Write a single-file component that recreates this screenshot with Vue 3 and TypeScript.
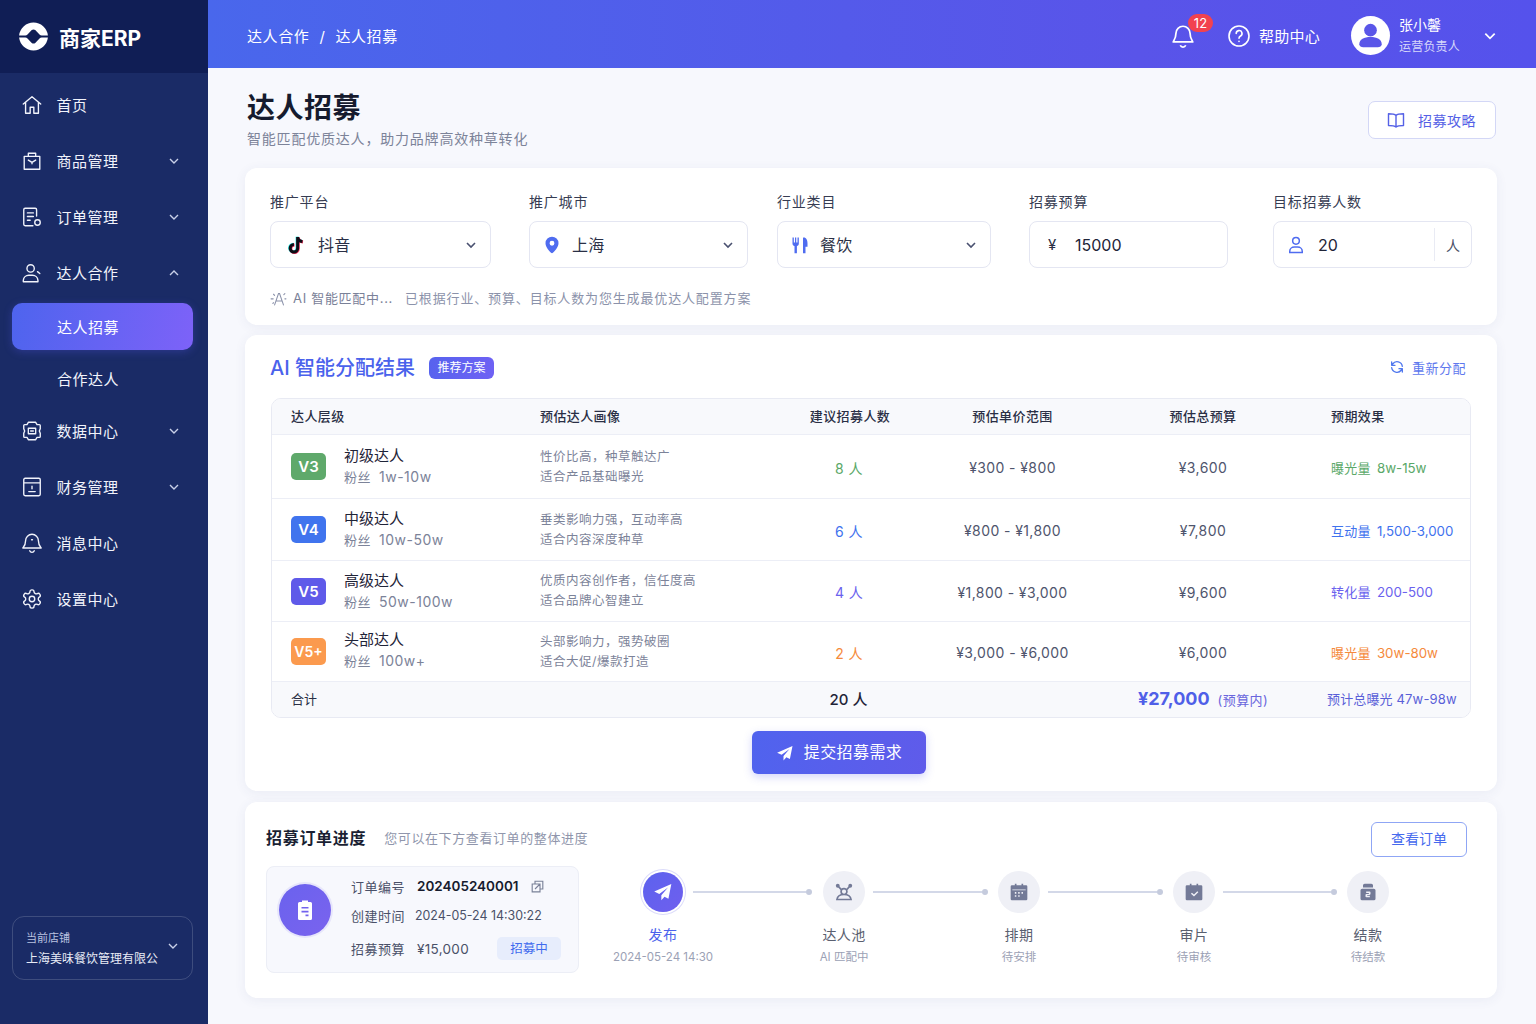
<script setup lang="ts">
interface NavItem {
  label: string;
  icon: string;
  arrow?: "down" | "up";
}

const iconHome = "M2.500 11 12 3l9.500 8M5 9v12h5v-6.500h4V21h5V9";
const iconGoods = "M3.500 7h17v14h-17zM8 7V3.500h8V7M8 11l4 2.500 4-2.500M12 13.500V15";
const iconOrder = "M17 11V4a1.500 1.500 0 0 0-1.500-1.500h-11A1.500 1.500 0 0 0 3 4v16a1.500 1.500 0 0 0 1.500 1.500H13M7 7.500h6.500M7 11.500h6.500M7 15.500h3M21 18a3 3 0 1 1-6 0 3 3 0 0 1 6 0z";
const iconTalent = "M14.500 7a4 4 0 1 1-8 0 4 4 0 0 1 8 0zM2.500 21.500V20a6 6 0 0 1 6-5.500h4a6 6 0 0 1 6 5.500v1.500zM18 10.500l2.500 2";
const iconData = "M8 2.500h8l1.500 2.500H20a1 1 0 0 1 1 1v3.500L20 12l1 2.500V18a1 1 0 0 1-1 1h-2.500L16 21.500H8L6.500 19H4a1 1 0 0 1-1-1v-3.500L4 12 3 9.500V6a1 1 0 0 1 1-1h2.500zM8 9h8v6H8zM10.500 12h3";
const iconFinance = "M4.500 2.500h15A1.500 1.500 0 0 1 21 4v16a1.500 1.500 0 0 1-1.500 1.500h-15A1.500 1.500 0 0 1 3 20V4a1.500 1.500 0 0 1 1.500-1.500zM3 7.500h18M8.500 17h7M12 11v3";
const iconBell = "M12 2.500A7 7 0 0 0 5 9.500c0 5.500-3 7.500-3 8h20c0-.5-3-2.500-3-8a7 7 0 0 0-7-7zM9.500 20.500a2.700 2.700 0 0 0 5 0M11.500 8.500h1";
const iconGear = "M12.220 2h-.44a2 2 0 0 0-2 2v.18a2 2 0 0 1-1 1.730l-.43.25a2 2 0 0 1-2 0l-.15-.08a2 2 0 0 0-2.730.73l-.22.38a2 2 0 0 0 .73 2.730l.15.1a2 2 0 0 1 1 1.720v.51a2 2 0 0 1-1 1.740l-.15.09a2 2 0 0 0-.73 2.730l.22.38a2 2 0 0 0 2.730.73l.15-.08a2 2 0 0 1 2 0l.43.25a2 2 0 0 1 1 1.730V20a2 2 0 0 0 2 2h.44a2 2 0 0 0 2-2v-.18a2 2 0 0 1 1-1.730l.43-.25a2 2 0 0 1 2 0l.15.08a2 2 0 0 0 2.730-.73l.22-.39a2 2 0 0 0-.73-2.730l-.15-.08a2 2 0 0 1-1-1.740v-.5a2 2 0 0 1 1-1.740l.15-.09a2 2 0 0 0 .73-2.730l-.22-.38a2 2 0 0 0-2.730-.73l-.15.08a2 2 0 0 1-2 0l-.43-.25a2 2 0 0 1-1-1.730V4a2 2 0 0 0-2-2zM15 12a3 3 0 1 1-6 0 3 3 0 0 1 6 0z";

const navTop: NavItem[] = [
  { label: "首页", icon: iconHome },
  { label: "商品管理", icon: iconGoods, arrow: "down" },
  { label: "订单管理", icon: iconOrder, arrow: "down" },
  { label: "达人合作", icon: iconTalent, arrow: "up" },
];
const navBottom: NavItem[] = [
  { label: "数据中心", icon: iconData, arrow: "down" },
  { label: "财务管理", icon: iconFinance, arrow: "down" },
  { label: "消息中心", icon: iconBell },
  { label: "设置中心", icon: iconGear },
];

const rows = [
  { level: "V3", cls: "green", name: "初级达人", fans: "1w-10w", p1: "性价比高，种草触达广", p2: "适合产品基础曝光", count: "8 人", price: "¥300 - ¥800", total: "¥3,600", kind: "曝光量", effect: "8w-15w" },
  { level: "V4", cls: "blue", name: "中级达人", fans: "10w-50w", p1: "垂类影响力强，互动率高", p2: "适合内容深度种草", count: "6 人", price: "¥800 - ¥1,800", total: "¥7,800", kind: "互动量", effect: "1,500-3,000" },
  { level: "V5", cls: "purple", name: "高级达人", fans: "50w-100w", p1: "优质内容创作者，信任度高", p2: "适合品牌心智建立", count: "4 人", price: "¥1,800 - ¥3,000", total: "¥9,600", kind: "转化量", effect: "200-500" },
  { level: "V5+", cls: "orange", name: "头部达人", fans: "100w+", p1: "头部影响力，强势破圈", p2: "适合大促/爆款打造", count: "2 人", price: "¥3,000 - ¥6,000", total: "¥6,000", kind: "曝光量", effect: "30w-80w" },
];

const steps = [
  { title: "达人池", sub: "AI 匹配中", kind: "pool" },
  { title: "排期", sub: "待安排", kind: "cal" },
  { title: "审片", sub: "待审核", kind: "check" },
  { title: "结款", sub: "待结款", kind: "pay" },
];
</script>

<template>
  <div class="layout">
    <aside class="sidebar">
      <div class="brand">
        <svg class="brand__logo" viewBox="0 0 30 30">
          <path fill="#fff" d="M.1 13.900A15 15 0 0 1 29.900 13.900H23.500c-1 0-1.600-.4-2.300-1L16.800 8.400c-1-.9-2.600-.9-3.600 0L8.800 12.900c-.7.600-1.300 1-2.300 1z" />
          <path fill="#fff" d="M.1 16.100A15 15 0 0 0 29.900 16.100H23.500c-1 0-1.600.4-2.300 1l-4.400 4.500c-1 .9-2.600.9-3.600 0l-4.400-4.500c-.7-.6-1.300-1-2.300-1z" />
        </svg>
        <span>商家ERP</span>
      </div>
      <nav class="nav">
        <div v-for="item in navTop" :key="item.label" class="nav__item">
          <svg class="nav__icon" viewBox="0 0 24 24"><path :d="item.icon" /></svg>
          <span>{{ item.label }}</span>
          <svg v-if="item.arrow" class="nav__arrow" :class="{ 'nav__arrow--up': item.arrow === 'up' }" viewBox="0 0 12 12"><path d="M2 4l4 4 4-4" /></svg>
        </div>
        <div class="nav__sub nav__sub--active">达人招募</div>
        <div class="nav__sub">合作达人</div>
        <div v-for="item in navBottom" :key="item.label" class="nav__item">
          <svg class="nav__icon" viewBox="0 0 24 24"><path :d="item.icon" /></svg>
          <span>{{ item.label }}</span>
          <svg v-if="item.arrow" class="nav__arrow" viewBox="0 0 12 12"><path d="M2 4l4 4 4-4" /></svg>
        </div>
      </nav>
      <div class="store">
        <div>
          <div class="store__label">当前店铺</div>
          <div class="store__name">上海美味餐饮管理有限公</div>
        </div>
        <svg class="nav__arrow store__arrow" viewBox="0 0 12 12"><path d="M2 4l4 4 4-4" /></svg>
      </div>
    </aside>

    <div class="content">
      <header class="topbar">
        <div class="crumbs"><span>达人合作</span><span class="crumbs__sep">/</span><span>达人招募</span></div>
        <div class="topbar__right">
          <div class="bell">
            <svg viewBox="0 0 24 24"><path d="M12 3a6.500 6.500 0 0 0-6.500 6.500c0 5-2.500 7-2.500 8h18c0-1-2.500-3-2.500-8A6.500 6.500 0 0 0 12 3zM9.500 20.500a2.700 2.700 0 0 0 5 0" /></svg>
            <span class="bell__badge">12</span>
          </div>
          <div class="help">
            <svg viewBox="0 0 24 24"><circle cx="12" cy="12" r="10" /><path d="M9.200 9.500a2.900 2.900 0 1 1 4.300 2.500c-1 .6-1.500 1.200-1.500 2.300M12 17.300v.2" /></svg>
            <span>帮助中心</span>
          </div>
          <div class="avatar">
            <svg viewBox="0 0 40 40"><circle cx="20" cy="14.500" r="6.500" /><path d="M8.500 29c0-5 5-7.500 11.500-7.500S31.500 24 31.500 29c0 2-2 3-4 3h-15c-2 0-4-1-4-3z" /></svg>
          </div>
          <div class="user">
            <div class="user__name">张小馨</div>
            <div class="user__role">运营负责人</div>
          </div>
          <svg class="user__arrow" viewBox="0 0 12 12"><path d="M2 4l4 4 4-4" /></svg>
        </div>
      </header>

      <main class="main">
        <div class="page-head">
          <div>
            <h1>达人招募</h1>
            <p>智能匹配优质达人，助力品牌高效种草转化</p>
          </div>
          <button class="guide" type="button">
            <svg viewBox="0 0 24 24"><path d="M12 6.500C10.500 5 8 4.500 3 4.500v14c5 0 7.500.5 9 2 1.500-1.500 4-2 9-2v-14c-5 0-7.500.5-9 2zM12 6.500v14" /></svg>
            <span>招募攻略</span>
          </button>
        </div>

        <section class="card filter">
          <div class="filter__fields">
            <div class="field field--platform">
              <label>推广平台</label>
              <div class="ctl">
                <svg class="ctl__icon" viewBox="0 0 24 24">
                  <g fill="none" stroke-width="3.600">
                    <path stroke="#25e6e0" d="M13.300 2v13.500a4.500 4.500 0 1 1-4.500-4.500M13.300 2c.4 3 2.400 5 5.700 5.400" />
                    <path stroke="#f5325c" d="M14.700 3v13.500a4.500 4.500 0 1 1-4.500-4.500M14.700 3c.4 3 2.400 5 5.700 5.400" />
                    <path stroke="#0d0d16" d="M14 2.500V16a4.500 4.500 0 1 1-4.500-4.500M14 2.500c.4 3 2.400 5 5.700 5.400" />
                  </g>
                </svg>
                <span class="ctl__text">抖音</span>
                <svg class="ctl__arrow" viewBox="0 0 12 12"><path d="M2 4l4 4 4-4" /></svg>
              </div>
            </div>
            <div class="field field--city">
              <label>推广城市</label>
              <div class="ctl">
                <svg class="ctl__icon" viewBox="0 0 24 24"><path fill="#4f6cf0" fill-rule="evenodd" d="M12 2a7.800 7.800 0 0 1 7.800 7.800c0 5-5 10-7.800 12.200-2.800-2.200-7.800-7.200-7.800-12.200A7.800 7.800 0 0 1 12 2zm0 5a2.900 2.900 0 1 0 0 5.800A2.900 2.900 0 0 0 12 7z" /></svg>
                <span class="ctl__text">上海</span>
                <svg class="ctl__arrow" viewBox="0 0 12 12"><path d="M2 4l4 4 4-4" /></svg>
              </div>
            </div>
            <div class="field field--industry">
              <label>行业类目</label>
              <div class="ctl">
                <svg class="ctl__icon" viewBox="0 0 24 24"><path fill="#4f6cf0" d="M3 3h1.600v6H6V3h1.500v6H9V3h1.600v7.500c0 1.500-1 2.400-2.300 2.800V22H5.400v-8.700C4 12.900 3 12 3 10.500zM16.500 3c3 0 4.500 3 4.500 7v4h-2.400v8h-3V3.500c0-.3.500-.5.900-.5z" /></svg>
                <span class="ctl__text">餐饮</span>
                <svg class="ctl__arrow" viewBox="0 0 12 12"><path d="M2 4l4 4 4-4" /></svg>
              </div>
            </div>
            <div class="field field--budget">
              <label>招募预算</label>
              <div class="ctl">
                <span class="ctl__yen">¥</span>
                <span class="ctl__value">15000</span>
              </div>
            </div>
            <div class="field field--target">
              <label>目标招募人数</label>
              <div class="ctl ctl--unit">
                <svg class="ctl__icon" viewBox="0 0 24 24"><path fill="none" stroke="#4f6cf0" stroke-width="1.800" d="M16 7a4 4 0 1 1-8 0 4 4 0 0 1 8 0zM4.500 21v-1.500c0-3 2.500-5 5.500-5h4c3 0 5.500 2 5.500 5V21z" /></svg>
                <span class="ctl__value">20</span>
                <span class="ctl__unit">人</span>
              </div>
            </div>
          </div>
          <div class="hint">
            <svg viewBox="0 0 24 24"><path d="M6.500 21 12 5h1.500L19 21M8.500 15.500h8M1.500 12.500h3M5 6l1.500 1.500M4 19l1-1M19.500 6.500l1.500-1.500M21 12.500h1.500" /></svg>
            <span class="hint__a">AI 智能匹配中...</span>
            <span class="hint__b">已根据行业、预算、目标人数为您生成最优达人配置方案</span>
          </div>
        </section>

        <section class="card result">
          <div class="result__head">
            <h2>AI 智能分配结果</h2>
            <span class="result__tag">推荐方案</span>
            <div class="result__redo">
              <svg viewBox="0 0 24 24"><path d="M20 11a8 8 0 0 0-14.500-3.500L4 9.500M4 4.500v5h5M4 13a8 8 0 0 0 14.500 3.500l1.500-2M20 19.500v-5h-5" /></svg>
              <span>重新分配</span>
            </div>
          </div>

          <div class="table">
            <div class="tr tr--head">
              <div class="td td--first">达人层级</div>
              <div class="td">预估达人画像</div>
              <div class="td td--c">建议招募人数</div>
              <div class="td td--c">预估单价范围</div>
              <div class="td td--c">预估总预算</div>
              <div class="td td--last">预期效果</div>
            </div>
            <div v-for="row in rows" :key="row.level" class="tr tr--body">
              <div class="td td--first level">
                <span class="level__badge" :class="`bg-${row.cls}`">{{ row.level }}</span>
                <div class="level__text">
                  <div class="level__name">{{ row.name }}</div>
                  <div class="level__fans"><span>粉丝</span>{{ row.fans }}</div>
                </div>
              </div>
              <div class="td persona">
                <div>{{ row.p1 }}</div>
                <div>{{ row.p2 }}</div>
              </div>
              <div class="td td--c num num--count" :class="`fg-${row.cls}`">{{ row.count }}</div>
              <div class="td td--c num">{{ row.price }}</div>
              <div class="td td--c num">{{ row.total }}</div>
              <div class="td td--last effect" :class="`fg-${row.cls}`"><span>{{ row.kind }}</span>{{ row.effect }}</div>
            </div>
            <div class="tr tr--foot">
              <div class="td td--first">合计</div>
              <div class="td"></div>
              <div class="td td--c foot__count">20 人</div>
              <div class="td"></div>
              <div class="td td--c foot__total"><strong>¥27,000</strong><span>(预算内)</span></div>
              <div class="td foot__effect">预计总曝光 47w-98w</div>
            </div>
          </div>

          <div class="result__action">
            <button class="submit" type="button">
              <svg viewBox="0 0 24 24"><path fill="#fff" d="M22 2.500 1.500 11.500l6 2.800L18 6.500l-8 9.500v6l3.800-4.300 4.700 2.300z" /></svg>
              <span>提交招募需求</span>
            </button>
          </div>
        </section>

        <section class="card progress">
          <div class="progress__head">
            <h3>招募订单进度</h3>
            <span>您可以在下方查看订单的整体进度</span>
            <button class="view" type="button">查看订单</button>
          </div>
          <div class="progress__body">
            <div class="order">
              <div class="order__avatar">
                <svg viewBox="0 0 24 24"><path fill="#fff" fill-rule="evenodd" d="M9 2.500h6V4h2.500A1.500 1.500 0 0 1 19 5.500v15a1.500 1.500 0 0 1-1.500 1.500h-11A1.500 1.500 0 0 1 5 20.500v-15A1.500 1.500 0 0 1 6.500 4H9zM8.500 9v1.600h7V9zm0 3.800v1.600h7v-1.600zm4 3.800v1.600h3v-1.600z" /></svg>
              </div>
              <div class="order__info">
                <div class="order__row">
                  <span class="order__key">订单编号</span>
                  <strong>202405240001</strong>
                  <svg class="order__copy" viewBox="0 0 24 24"><path d="M8 8V3.500h12.500V16H16M3.500 8H16v12.500H3.500zM8 16l8-8" /></svg>
                </div>
                <div class="order__row order__row--time">
                  <span class="order__key">创建时间</span>
                  <span class="order__time">2024-05-24 14:30:22</span>
                </div>
                <div class="order__row order__row--budget">
                  <span class="order__key">招募预算</span>
                  <span class="order__money">¥15,000</span>
                  <span class="order__tag">招募中</span>
                </div>
              </div>
            </div>

            <div class="steps">
              <div class="step step--active">
                <div class="step__circle">
                  <svg viewBox="0 0 24 24"><path fill="#fff" d="M22 2.500 1.500 11.500l6 2.800L18 6.500l-8 9.500v6l3.800-4.300 4.700 2.300z" /></svg>
                </div>
                <div class="step__title">发布</div>
                <div class="step__sub">2024-05-24 14:30</div>
              </div>
              <template v-for="(step, i) in steps" :key="step.title">
                <div class="link" :class="{ 'link--first': i === 0, 'link--last': i === steps.length - 1 }"><i></i><b></b></div>
                <div class="step">
                  <div class="step__circle">
                    <svg v-if="step.kind === 'pool'" viewBox="0 0 24 24"><path fill="none" stroke="#737a97" stroke-width="2" d="M4.500 4.500 9 9.500M19.500 4.500 15 9.500M15.500 11.500a3.500 3.500 0 1 1-7 0 3.500 3.500 0 0 1 7 0zM3.500 21c.5-3.500 3.500-6 8.500-6s8 2.500 8.500 6z" /><circle cx="4.500" cy="4.500" r="2.300" fill="#737a97" /><circle cx="19.500" cy="4.500" r="2.300" fill="#737a97" /></svg>
                    <svg v-else-if="step.kind === 'cal'" viewBox="0 0 24 24"><path fill="#737a97" fill-rule="evenodd" d="M7 2h2v2h6V2h2v2h3.500A1.500 1.500 0 0 1 22 5.500v15a1.500 1.500 0 0 1-1.500 1.500h-17A1.500 1.500 0 0 1 2 20.500v-15A1.500 1.500 0 0 1 3.500 4H7zM4 9v.8h16V9zm3 3v2h1.800v-2zm4 0v2h1.800v-2zm4 0v2h1.800v-2zm-8 4v1.800h1.800V16zm4 0v1.800h1.800V16z" /></svg>
                    <svg v-else-if="step.kind === 'check'" viewBox="0 0 24 24"><path fill="#737a97" fill-rule="evenodd" d="M7 2h2v2h6V2h2v2h3.500A1.500 1.500 0 0 1 22 5.500v15a1.500 1.500 0 0 1-1.500 1.500h-17A1.500 1.500 0 0 1 2 20.500v-15A1.500 1.500 0 0 1 3.500 4H7zm9 9-4 4-2.500-2.200-1.200 1.300 3.700 3.300 5.200-5.200z" /></svg>
                    <svg v-else viewBox="0 0 24 24"><path fill="#737a97" fill-rule="evenodd" d="M8 2h8a2 2 0 0 1 2 2v2.500H6V4a2 2 0 0 1 2-2zM5 8h14a2 2 0 0 1 2 2v10a2 2 0 0 1-2 2H5a2 2 0 0 1-2-2V10a2 2 0 0 1 2-2zm4.800 3.500v1.800h3.200v1H10c-.6 0-1 .4-1 1v2c0 .6.400 1 1 1h4.200v-1.800H11v-1h3c.6 0 1-.4 1-1v-2c0-.6-.4-1-1-1z" /></svg>
                  </div>
                  <div class="step__title">{{ step.title }}</div>
                  <div class="step__sub">{{ step.sub }}</div>
                </div>
              </template>
            </div>
          </div>
        </section>
      </main>
    </div>
  </div>
</template>

<style>
body {
  margin: 0;
  background: #f7f8fd;
}
</style>

<style scoped>
.layout {
  display: flex;
  min-height: 1024px;
  font-family: Inter, "Noto Sans CJK SC", sans-serif;
  color: #1c2238;
}

svg {
  display: block;
  flex: none;
}

/* Sidebar */
.sidebar {
  width: 208px;
  flex: none;
  display: flex;
  flex-direction: column;
  background: #1a2b66;
  color: #fff;
}

.brand {
  height: 73px;
  display: flex;
  align-items: center;
  gap: 11px;
  padding-left: 19px;
  background: #101e55;
  font-size: 21px;
  font-weight: 700;
  box-sizing: border-box;
}

.brand__logo {
  width: 29px;
  height: 31px;
}

.nav {
  padding-top: 3.5px;
}

.nav__item {
  height: 56px;
  display: flex;
  align-items: center;
  padding: 0 28px 0 21px;
  font-size: 15px;
  letter-spacing: 0.5px;
  color: #f1f3fb;
}

.nav__item span {
  margin-top: -1px;
}

.nav__icon {
  width: 22px;
  height: 22px;
  margin-right: 13.5px;
  fill: none;
  stroke: #f1f3fb;
  stroke-width: 1.5;
  stroke-linejoin: round;
  stroke-linecap: round;
}

.nav__arrow {
  width: 12px;
  height: 12px;
  margin-left: auto;
  fill: none;
  stroke: #c9d0e8;
  stroke-width: 1.4;
}

.nav__arrow--up {
  transform: rotate(180deg);
}

.nav__sub {
  height: 47px;
  margin: 0 15px 0 12px;
  padding-left: 45px;
  display: flex;
  align-items: center;
  border-radius: 10px;
  font-size: 15px;
  letter-spacing: 0.5px;
  color: #f1f3fb;
}

.nav__sub--active {
  margin-top: 2.5px;
  margin-bottom: 5px;
  background: linear-gradient(100deg, #4e64ee, #7d62f8);
  box-shadow: 0 2px 8px rgba(90, 90, 240, 0.3);
  color: #fff;
}

.nav__sub:not(.nav__sub--active) {
  margin-bottom: 0.5px;
}

.store {
  margin: auto 15px 44px 12px;
  height: 64px;
  box-sizing: border-box;
  padding: 1px 13px 0;
  display: flex;
  align-items: center;
  justify-content: space-between;
  border: 1px solid rgba(255, 255, 255, 0.16);
  border-radius: 12px;
}

.store__label {
  font-size: 11px;
  color: #b9c2e0;
  line-height: 16px;
}

.store__name {
  margin-top: 4px;
  font-size: 12px;
  line-height: 18px;
  white-space: nowrap;
  color: #e8ebf6;
}

.store__arrow {
  margin-bottom: 6px;
}

/* Topbar */
.content {
  flex: 1;
  min-width: 0;
}

.topbar {
  height: 68px;
  display: flex;
  align-items: center;
  justify-content: space-between;
  box-sizing: border-box;
  padding: 3px 39px 0 39px;
  background: linear-gradient(90deg, #4967ec, #5954e9 70%, #5552ec);
  color: #fff;
  font-size: 15px;
}

.crumbs {
  letter-spacing: 0.6px;
}

.crumbs__sep {
  margin: 0 10px;
}

.topbar__right {
  display: flex;
  align-items: center;
}

.bell {
  position: relative;
  width: 26px;
  height: 26px;
  margin-right: 31px;
}

.bell svg {
  width: 26px;
  height: 26px;
  fill: none;
  stroke: #fff;
  stroke-width: 1.6;
  stroke-linejoin: round;
}

.bell__badge {
  position: absolute;
  left: 18px;
  top: -9px;
  width: 25px;
  height: 18px;
  border-radius: 9px;
  background: #f2424f;
  font-size: 13px;
  line-height: 18px;
  text-align: center;
}

.help {
  display: flex;
  align-items: center;
  gap: 8px;
  margin-right: 31px;
  letter-spacing: 0.25px;
}

.help svg {
  width: 24px;
  height: 24px;
  fill: none;
  stroke: #fff;
  stroke-width: 1.6;
  stroke-linecap: round;
}

.avatar {
  width: 39px;
  height: 39px;
  border-radius: 50%;
  background: #fff;
  margin-right: 9px;
}

.avatar svg {
  width: 39px;
  height: 39px;
  fill: #5a56e8;
}

.user__name {
  font-size: 14px;
  line-height: 20px;
}

.user__role {
  margin-top: 3px;
  font-size: 12px;
  line-height: 18px;
  letter-spacing: 0.2px;
  color: #d6d8fa;
}

.user__arrow {
  width: 14px;
  height: 14px;
  margin-left: 23px;
  fill: none;
  stroke: #fff;
  stroke-width: 1.5;
}

/* Main */
.main {
  padding: 0 39px 0 37px;
}

.page-head {
  height: 100px;
  display: flex;
  justify-content: space-between;
  box-sizing: border-box;
  padding: 21px 1px 0 2px;
}

h1 {
  margin: 0;
  font-size: 28px;
  line-height: 38px;
  font-weight: 600;
  letter-spacing: 0.5px;
  color: #161b2e;
}

.page-head p {
  margin: 2px 0 0;
  font-size: 14px;
  line-height: 20px;
  letter-spacing: 0.8px;
  color: #7c8399;
}

.guide {
  width: 128px;
  height: 38px;
  margin-top: 12px;
  padding: 0 2px 0 0;
  display: flex;
  align-items: center;
  justify-content: center;
  gap: 12px;
  background: #fff;
  border: 1px solid #d3d7f6;
  border-radius: 7px;
  font: inherit;
  font-size: 14px;
  letter-spacing: 0.5px;
  color: #5561e6;
}

.guide svg {
  width: 20px;
  height: 20px;
  fill: none;
  stroke: #5561e6;
  stroke-width: 1.7;
  stroke-linejoin: round;
}

.card {
  background: #fff;
  border-radius: 12px;
  box-shadow: 0 2px 12px rgba(60, 70, 130, 0.07);
}

/* Filter */
.filter {
  height: 157px;
  box-sizing: border-box;
  padding: 24px 25px 0;
}

.filter__fields {
  display: flex;
}

.field label {
  display: block;
  height: 20px;
  margin-bottom: 9px;
  font-size: 14px;
  line-height: 20px;
  letter-spacing: 0.8px;
  color: #363c52;
}

.field--platform { width: 221px; }
.field--city { width: 219px; margin-left: 38px; }
.field--industry { width: 214px; margin-left: 29px; }
.field--budget { width: 199px; margin-left: 38px; }
.field--target { width: 199px; margin-left: 45px; }

.ctl {
  height: 47px;
  display: flex;
  align-items: center;
  box-sizing: border-box;
  padding: 0 13px 0 12px;
  border: 1px solid #e4e6f2;
  border-radius: 8px;
  background: #fff;
  font-size: 16px;
  overflow: hidden;
}

.field--platform .ctl { padding-left: 15px; }

.ctl__icon {
  width: 20px;
  height: 20px;
  margin-right: 10px;
}

.field--target .ctl__icon { margin-right: 12px; }
.field--platform .ctl__icon { margin-right: 12px; }

.ctl__text {
  margin-top: -2px;
  letter-spacing: 0.3px;
  color: #2a2f45;
}

.ctl__arrow {
  width: 12px;
  height: 12px;
  margin-left: auto;
  fill: none;
  stroke: #4a5170;
  stroke-width: 1.6;
}

.ctl__yen {
  width: 20px;
  margin-right: 13px;
  font-size: 15px;
  text-align: center;
  color: #2a2f45;
}

.ctl__value {
  color: #1f2438;
}

.ctl--unit {
  padding-right: 0;
}

.ctl__unit {
  margin-left: auto;
  width: 36px;
  height: 33px;
  border-left: 1px solid #e9ebf4;
  display: flex;
  align-items: center;
  justify-content: center;
  font-size: 14px;
  color: #4a5068;
}

.hint {
  display: flex;
  align-items: center;
  margin-top: 20px;
  font-size: 13px;
  line-height: 20px;
  color: #8b92aa;
}

.hint svg {
  width: 17px;
  height: 17px;
  margin-right: 6px;
  fill: none;
  stroke: #8b92aa;
  stroke-width: 1.5;
  stroke-linecap: round;
}

.hint__a {
  width: 112px;
  letter-spacing: 0.7px;
  white-space: nowrap;
  color: #7a8198;
}

.hint__b {
  letter-spacing: 0.85px;
}

/* Result */
.result {
  margin-top: 10px;
  height: 456px;
  box-sizing: border-box;
  padding: 21px 26px 0;
}

.result__head {
  height: 24px;
  display: flex;
  align-items: center;
  margin-bottom: 18px;
  margin-left: -1px;
}

h2 {
  margin: 0;
  font-size: 20px;
  line-height: 24px;
  font-weight: 500;
  color: #4a62ec;
}

.result__tag {
  margin-left: 14px;
  width: 65px;
  height: 22px;
  border-radius: 6px;
  background: linear-gradient(100deg, #5663ee, #6f61f4);
  color: #fff;
  font-size: 12px;
  line-height: 22px;
  text-align: center;
}

.result__redo {
  margin: -2px 5px 0 auto;
  display: flex;
  align-items: center;
  gap: 7px;
  font-size: 13px;
  letter-spacing: 0.5px;
  color: #5e78ee;
}

.result__redo svg {
  width: 16px;
  height: 16px;
  fill: none;
  stroke: #5078ee;
  stroke-width: 2;
  stroke-linecap: round;
  stroke-linejoin: round;
}

.table {
  border: 1px solid #e8eaf3;
  border-radius: 10px;
  overflow: hidden;
  height: 320px;
  box-sizing: border-box;
}

.tr {
  display: grid;
  grid-template-columns: 268px 230px 160px 165px 216px 1fr;
  align-items: center;
  border-bottom: 1px solid #eceef6;
  box-sizing: border-box;
}

.tr--head {
  height: 36px;
  padding-bottom: 2px;
  background: #f8f9fc;
  font-size: 13px;
  letter-spacing: 0.4px;
  color: #2a2f45;
  font-weight: 500;
}

.tr--body {
  height: 62px;
}

.tr--body:nth-child(2) { height: 64px; }
.tr--body:nth-child(4) { height: 61px; }
.tr--body:nth-child(5) { height: 60px; }

.tr--body:nth-child(5) .level__text {
  margin-top: -4px;
}

.tr--foot {
  height: 36px;
  padding-bottom: 4px;
  background: #f8f9fc;
  border-bottom: none;
  font-size: 13px;
  color: #2a2f45;
}

.td--first {
  padding-left: 19px;
}

.td--last {
  padding-left: 20px;
}

.td--c {
  text-align: center;
}

.level {
  display: flex;
  align-items: center;
  gap: 18px;
}

.level__badge {
  width: 35px;
  height: 27px;
  border-radius: 5px;
  color: #fff;
  font-size: 15px;
  font-weight: 600;
  line-height: 27px;
  text-align: center;
}

.level__badge.bg-orange {
  font-size: 14px;
}

.level__text {
  margin-top: -1px;
}

.level__name {
  font-size: 15px;
  line-height: 21px;
  color: #1f2438;
}

.level__fans {
  margin-top: 1px;
  font-size: 14px;
  line-height: 20px;
  letter-spacing: 0.5px;
  color: #7c8399;
}

.level__fans span {
  margin-right: 8px;
  font-size: 13px;
}

.persona {
  font-size: 12.5px;
  line-height: 20px;
  letter-spacing: 0.5px;
  color: #7c8399;
}

.num {
  padding-top: 2px;
  font-size: 14px;
  letter-spacing: 0.4px;
  color: #4f556d;
}

.num--count {
  padding-right: 2px;
}

.num.fg-green,
.effect.fg-green { color: #5aa868; }
.num.fg-blue,
.effect.fg-blue { color: #3f72ee; }
.num.fg-purple,
.effect.fg-purple { color: #6a62ee; }
.num.fg-orange,
.effect.fg-orange { color: #f58a3c; }

.bg-green { background: #5fa96b; }
.bg-blue { background: #4074ee; }
.bg-purple { background: #5f5ae9; }
.bg-orange { background: #fb9a4e; }

.effect {
  padding-top: 1px;
  font-size: 13.3px;
  white-space: nowrap;
}

.effect span {
  margin-right: 6px;
  font-size: 13px;
  letter-spacing: 0.3px;
}

.foot__count {
  font-size: 15px;
  font-weight: 500;
  color: #1f2438;
  padding-right: 3px;
}

.foot__total strong {
  font-size: 18px;
  font-weight: 700;
  color: #4f5fe8;
}

.foot__total span {
  margin-left: 8px;
  font-size: 13px;
  letter-spacing: 0.4px;
  color: #6a66dd;
}

.foot__effect {
  padding-left: 16px;
  font-size: 13px;
  letter-spacing: 0.15px;
  color: #5a5fd8;
  white-space: nowrap;
}

.result__action {
  display: flex;
  justify-content: center;
  margin-top: 13px;
  padding-right: 64px;
}

.submit {
  width: 174px;
  height: 43px;
  display: flex;
  align-items: center;
  justify-content: center;
  gap: 10px;
  border: none;
  border-radius: 6px;
  background: linear-gradient(100deg, #5063ee, #5f5bea);
  box-shadow: 0 3px 8px rgba(85, 90, 235, 0.25);
  color: #fff;
  font: inherit;
  font-size: 16px;
  letter-spacing: 0.4px;
}

.submit span {
  margin-top: -3px;
}

.submit svg {
  width: 18px;
  height: 18px;
}

/* Progress */
.progress {
  margin-top: 11px;
  height: 196px;
  box-sizing: border-box;
  padding: 20px 30px 0 21px;
}

.progress__head {
  height: 35px;
  display: flex;
  align-items: center;
  margin-bottom: 9px;
}

h3 {
  margin: -5px 18px 0 0;
  font-size: 16px;
  font-weight: 600;
  letter-spacing: 0.7px;
  color: #1a1f33;
}

.progress__head span {
  margin-top: -5px;
  font-size: 13px;
  letter-spacing: 0.6px;
  color: #9096ac;
}

.view {
  margin-left: auto;
  width: 96px;
  height: 35px;
  padding: 0 0 3px;
  border: 1px solid #8fa6f5;
  border-radius: 6px;
  background: #fff;
  color: #4569ee;
  font: inherit;
  font-size: 14px;
}

.progress__body {
  display: flex;
}

.order {
  width: 313px;
  height: 107px;
  flex: none;
  box-sizing: border-box;
  display: flex;
  border: 1px solid #eceef6;
  border-radius: 8px;
  background: #f7f8fd;
}

.order__avatar {
  width: 52px;
  height: 52px;
  margin: 17px 20px 0 12px;
  flex: none;
  display: flex;
  align-items: center;
  justify-content: center;
  border-radius: 50%;
  background: linear-gradient(135deg, #6a62ee, #7a63ee);
  box-shadow: 0 0 0 2px #e7e6fb;
}

.order__avatar svg {
  width: 24px;
  height: 24px;
}

.order__info {
  padding-top: 9px;
  font-size: 13.5px;
  color: #4a5068;
}

.order__row {
  display: flex;
  align-items: center;
  height: 20px;
  white-space: nowrap;
}

.order__key {
  width: 66px;
  color: #4a5068;
  font-size: 13px;
  letter-spacing: 0.5px;
}

.order__row strong {
  font-size: 13.5px;
  font-weight: 600;
  color: #161b2e;
}

.order__copy {
  width: 15px;
  height: 15px;
  margin-left: 11px;
  fill: none;
  stroke: #7a8198;
  stroke-width: 1.8;
}

.order__row--time {
  margin-top: 9px;
}

.order__row--time .order__key {
  width: 64px;
}

.order__time {
  font-size: 12.4px;
}

.order__row--budget {
  height: 23px;
  margin-top: 12px;
}

.order__money {
  width: 80px;
  letter-spacing: 0.3px;
}

.order__tag {
  width: 64px;
  height: 23px;
  border-radius: 5px;
  background: #e7edfc;
  color: #3f6bee;
  font-size: 12.5px;
  line-height: 23px;
  text-align: center;
}

.steps {
  display: flex;
  align-items: flex-start;
  margin-left: 62px;
  padding-top: 5px;
}

.step {
  width: 42px;
  display: flex;
  flex-direction: column;
  align-items: center;
  flex: none;
  white-space: nowrap;
}

.step--active {
  width: 44px;
}

.step__circle {
  width: 42px;
  height: 42px;
  margin-bottom: 11px;
  display: flex;
  align-items: center;
  justify-content: center;
  border-radius: 50%;
  background: #eff0f6;
}

.step__circle svg {
  width: 20px;
  height: 20px;
}

.step--active .step__circle {
  width: 40px;
  height: 40px;
  margin: 1px 0 12px;
  background: linear-gradient(135deg, #5c62ee, #6f5fee);
  box-shadow: 0 0 0 2px #fff, 0 0 0 3px #dcdcfa;
}

.step__title {
  font-size: 14px;
  line-height: 22px;
  letter-spacing: 0.4px;
  color: #5a6070;
}

.step--active .step__title {
  color: #4a62ec;
}

.step__sub {
  margin-top: 2px;
  font-size: 11.5px;
  line-height: 18px;
  color: #9ba1b5;
}

.link {
  width: 133px;
  height: 42px;
  flex: none;
  display: flex;
  align-items: center;
  padding: 0 10px 0 8px;
  box-sizing: border-box;
}

.link--first {
  width: 138px;
  padding-right: 11px;
}

.link--last {
  width: 132px;
}

.link i {
  flex: 1;
  height: 1.5px;
  background: #d3d8e8;
}

.link b {
  width: 6px;
  height: 6px;
  border-radius: 50%;
  background: #c5cbdd;
}
</style>
